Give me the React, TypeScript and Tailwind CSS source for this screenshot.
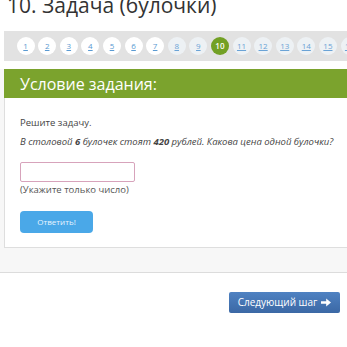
import React from 'react';

const STEPS = Array.from({ length: 17 }, (_, i) => i + 1);
const CURRENT = 10;
const DONE = 7;

function StepDot({ n }: { n: number }) {
  if (n === CURRENT) {
    return (
      <span className="flex h-[18px] w-[18px] shrink-0 items-center justify-center rounded-full bg-[#72a024] text-[8px] font-semibold text-white">
        {n}
      </span>
    );
  }
  return (
    <span
      className={
        n <= DONE
          ? 'flex h-[18px] w-[18px] shrink-0 items-center justify-center rounded-full bg-white text-[8px] text-[#5a9ad2] underline'
          : 'flex h-[18px] w-[18px] shrink-0 items-center justify-center rounded-full bg-[#edf1f4] text-[8px] text-[#6aa3d6] underline'
      }
    >
      {n}
    </span>
  );
}

export default function App() {
  return (
    <div className="h-[347px] w-[347px] overflow-hidden bg-white font-['Open_Sans',sans-serif]">
      <h1 className="-mt-[5px] whitespace-nowrap pl-[7px] text-[21px] leading-[20px] text-[#333]">
        10. Задача (булочки)
      </h1>

      {/* step pager */}
      <div className="ml-[4px] mt-[16px] flex h-[30px] items-center gap-[3.6px] overflow-hidden bg-[#e2e2e2] pl-[12.6px]">
        {STEPS.map((n) => (
          <StepDot key={n} n={n} />
        ))}
      </div>

      <div className="mt-[8px] border-b border-[#dcdcdc] bg-[#f7f7f7] pb-[24px] pl-[4px]">
        <div className="flex h-[29px] items-center bg-[#7ba32d] pl-[16px] text-[16px] text-white">
          Условие задания:
        </div>

        <div className="border-b border-l border-[#dedede] bg-white pb-[14px] pl-[15px] pt-[18px] text-[#444]">
          <p className="text-[9.5px] leading-[14px]">Решите задачу.</p>
          <p className="mt-[5px] whitespace-nowrap text-[9.5px] italic leading-[14px]">
            В столовой <b>6</b> булочек стоят <b>420</b> рублей. Какова цена одной булочки?
          </p>
          <input
            type="text"
            className="mt-[13px] block h-[20px] w-[115px] rounded-[2px] border border-[#d7a3bb] bg-white"
          />
          <p className="mt-[1px] text-[9.5px] leading-[14px] text-[#555]">(Укажите только число)</p>
          <button className="mt-[14px] flex h-[22px] w-[73px] items-center justify-center rounded-[4px] bg-[#4aa8e8] text-[8px] text-[#e6f4ff]">
            Ответить!
          </button>
        </div>
      </div>

      <div className="mr-[7px] mt-[19px] flex justify-end">
        <button className="flex h-[21px] w-[111px] items-center justify-center gap-[4px] rounded-[2px] bg-gradient-to-b from-[#4f82c2] to-[#3b68a5] text-[10px] text-white">
          Следующий шаг
          <svg width="10" height="9" viewBox="0 0 10 9" fill="white">
            <path d="M0 3.3h5.2V0.6L10 4.5 5.2 8.4V5.7H0z" />
          </svg>
        </button>
      </div>
    </div>
  );
}
